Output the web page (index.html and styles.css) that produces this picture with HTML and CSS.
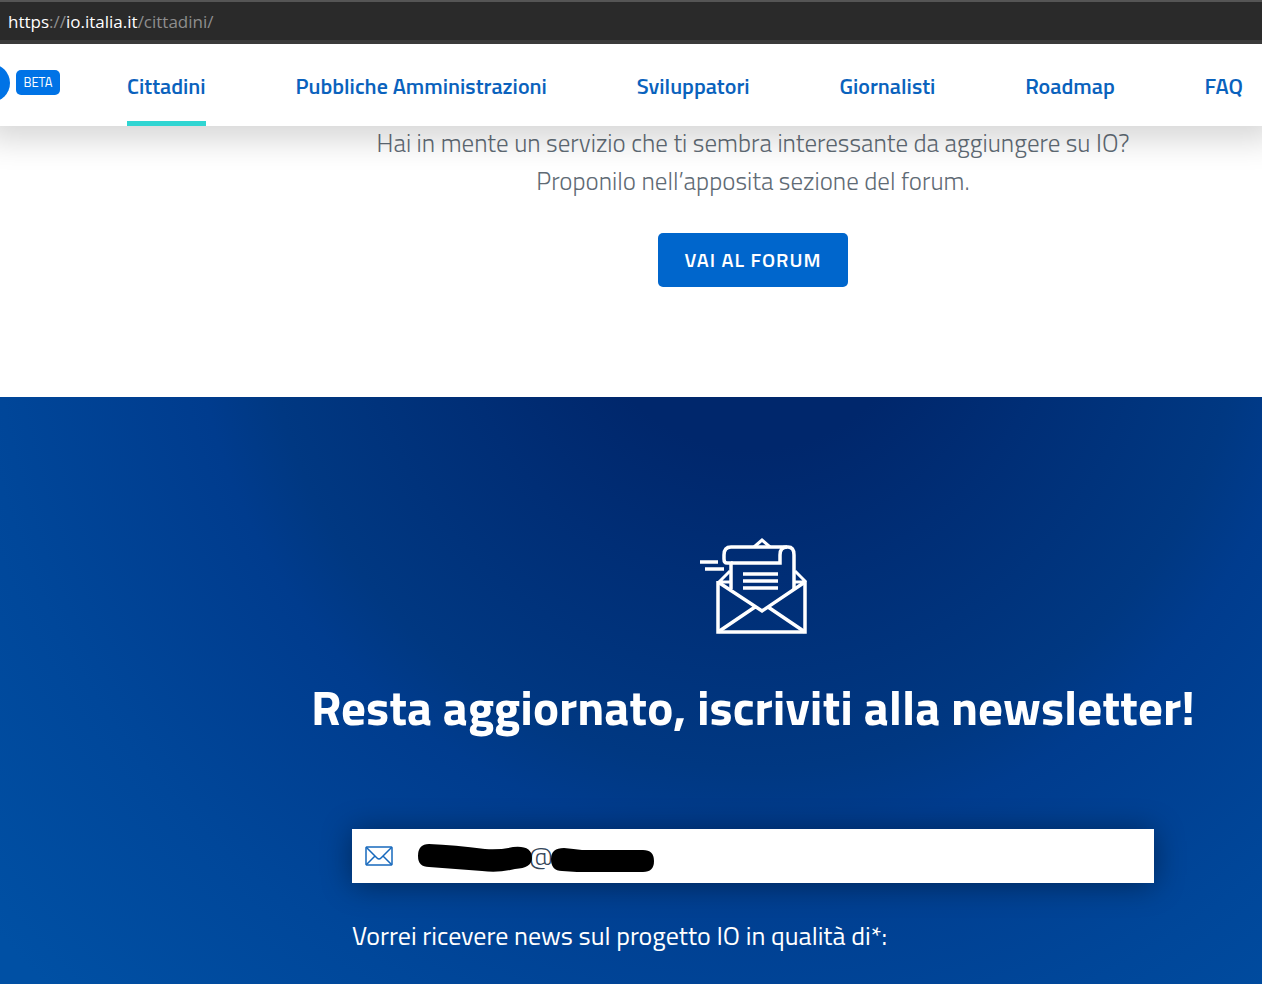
FILE: index.html
```
<!DOCTYPE html>
<html lang="it">
<head>
    <meta charset="UTF-8">
    <meta name="viewport" content="width=device-width, initial-scale=1.0">
    <title>IO - Cittadini</title>
    <link rel="stylesheet" href="styles.css">
</head>
<body>
    <div class="address-bar">
        <span class="bright">https</span>://<span class="bright">io.italia.it</span>/cittadini/
    </div>
    <header class="site-header">
        <div class="brand">
            <span class="logo"></span>
            <span class="beta">BETA</span>
        </div>
        <nav class="main-nav">
            <a href="#" class="active">Cittadini</a>
            <a href="#">Pubbliche Amministrazioni</a>
            <a href="#">Sviluppatori</a>
            <a href="#">Giornalisti</a>
            <a href="#">Roadmap</a>
            <a href="#">FAQ</a>
        </nav>
    </header>
    <main>
        <section class="forum">
            <p>Hai in mente un servizio che ti sembra interessante da aggiungere su IO?<br>Proponilo nell’apposita sezione del forum.</p>
            <a href="#" class="btn">VAI AL FORUM</a>
        </section>
        <section class="newsletter">
            <svg class="newsletter-icon" width="108" height="98" viewBox="0 0 108 98" fill="none" stroke="#fff" stroke-width="3.5">
                <path d="M55 9l8-7 8 7" stroke-width="3"/>
                <path d="M32 51V25h-4q-3 0-3-4v-4q0-8 7-8h57q6 0 6 8v34"/>
                <path d="M32 25h49v-8q0-8 7-8"/>
                <path d="M1 24h18M6 31h19M44 36h35M44 43h35M44 50h35"/>
                <path d="M31 33L20 44M96 33l11 11M20 44h12M107 44H95" stroke-width="3"/>
                <path d="M19 43v51h87V43"/>
                <path d="M19 44l44 29 43-29M19 94l37-25M106 94L69 69"/>
            </svg>
            <h2>Resta aggiornato, iscriviti alla newsletter!</h2>
            <form class="newsletter-form">
                <div class="email-field">
                    <svg class="mail-icon" width="28" height="20" viewBox="0 0 28 20" fill="none" stroke="#1769bd" stroke-width="1.5">
                        <rect x="1" y="1" width="26" height="18" rx="1"/>
                        <path d="M1 1l11 11q2 2 4 0L27 1M1 19l9-9M27 19l-9-9"/>
                    </svg>
                    <input type="text" value="@" aria-label="Email">
                    <svg class="marker" width="238" height="30" viewBox="0 0 238 30">
                        <path d="M12 1Q38 2 68 6Q84 7 96 4Q115 2 115 15Q115 25 98 26Q82 30 65 28L12 24Q1 24 1 13Q1 1 12 1Z"/>
                        <path d="M147 5Q157 6 165 7H226Q237 7 237 18Q237 29 226 29H160L145 28Q134 28 134 16Q134 5 147 5Z"/>
                    </svg>
                </div>
                <p>Vorrei ricevere news sul progetto IO in qualità di*:</p>
            </form>
        </section>
    </main>
</body>
</html>
```
FILE: styles.css
```
* {
    box-sizing: border-box;
}
body {
    margin: 0;
    min-height: 100vh;
    display: flex;
    flex-direction: column;
    font-family: "Titillium Web", Roboto, sans-serif;
    background-color: #fff;
    overflow-x: hidden;
}
a {
    text-decoration: none;
}
.address-bar {
    position: relative;
    z-index: 1;
    height: 44px;
    padding-left: 8px;
    border-top: 2px solid #555;
    border-bottom: 4px solid #3a3a3a;
    background-color: #2a2a2a;
    color: #8e8e8e;
    font-family: "Segoe UI", "Open Sans", sans-serif;
    font-size: 17px;
    line-height: 40px;
}
.address-bar .bright {
    color: #fff;
}
.site-header {
    position: relative;
    height: 82px;
    padding-right: 19px;
    display: flex;
    background-color: #fff;
    box-shadow: 0 0 30px 14px rgba(0, 0, 0, 0.16);
}
.brand {
    width: 127px;
    flex-shrink: 0;
    display: flex;
    align-items: center;
    gap: 6px;
    padding-bottom: 5px;
}
.logo {
    width: 38px;
    height: 38px;
    margin-left: -28px;
    border-radius: 50%;
    background-color: #0073e6;
}
.beta {
    width: 44px;
    border-radius: 5px;
    background-color: #0073e6;
    color: #fff;
    font-size: 13px;
    font-weight: 400;
    line-height: 25px;
    text-align: center;
}
.main-nav {
    flex: 1;
    display: flex;
    justify-content: space-between;
}
.main-nav a {
    border-bottom: 5px solid transparent;
    color: #0a62bd;
    font-size: 22px;
    font-weight: 600;
    line-height: 85px;
    height: 82px;
}
.main-nav .active {
    border-color: #30d5d2;
}
main {
    flex: 1;
    display: flex;
    flex-direction: column;
}
.forum {
    padding: 0 0 110px 244px;
    text-align: center;
}
.forum p {
    margin: -2px 0 33px;
    color: #5f6b75;
    font-size: 25px;
    font-weight: 300;
    line-height: 38px;
}
.btn {
    display: inline-block;
    padding: 0 27px;
    border-radius: 5px;
    background-color: #0066cc;
    color: #fff;
    font-size: 20px;
    font-weight: 600;
    letter-spacing: 1px;
    line-height: 54px;
    vertical-align: top;
}
.newsletter {
    flex: 1;
    padding: 141px 0 32px 244px;
    display: flex;
    flex-direction: column;
    align-items: center;
    background: radial-gradient(circle at 753px -118px, #00276c 170px, #002e76 300px, #003882 490px, #003c8e 560px, #00479a 780px, #0050a4 1000px);
    color: #fff;
}
.newsletter h2 {
    margin: 39px 0 90px;
    font-size: 49px;
    font-weight: 700;
    line-height: 64px;
    white-space: nowrap;
}
.newsletter-form {
    width: 802px;
    max-width: 100%;
}
.email-field {
    position: relative;
    height: 54px;
    display: flex;
    align-items: center;
    padding-left: 13px;
    background-color: #fff;
    box-shadow: 0 2px 30px rgba(0, 0, 0, 0.4);
}
.email-field input {
    flex: 1;
    padding: 0 0 0 136px;
    border: 0;
    outline: 0;
    background: none;
    color: #34465a;
    font-family: inherit;
    font-size: 24px;
    font-weight: 300;
    line-height: 54px;
}
/* scribble covering both parts of the address */
.marker {
    position: absolute;
    top: 14px;
    left: 65px;
}
.newsletter-form p {
    margin: 34px 0 0;
    font-size: 26px;
    font-weight: 400;
    line-height: 38px;
}
```
